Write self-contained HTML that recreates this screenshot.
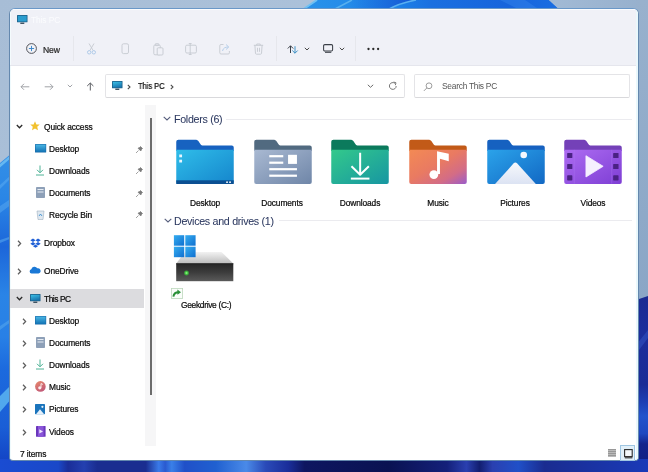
<!DOCTYPE html>
<html><head><meta charset="utf-8">
<style>
*{margin:0;padding:0;box-sizing:border-box}
html,body{width:648px;height:472px;overflow:hidden}
body{position:relative;font-family:"Liberation Sans",sans-serif;background:#a7bcd4}
.a{position:absolute}
.t{will-change:transform;position:absolute;font-size:8.4px;color:#0c0c0c;white-space:nowrap;line-height:10px;letter-spacing:-0.1px;-webkit-text-stroke:0.22px currentColor}
.h{will-change:transform;position:absolute;font-size:10.7px;color:#2c3960;white-space:nowrap;line-height:12px;letter-spacing:-0.3px;-webkit-text-stroke:0.05px currentColor}
.lbl{will-change:transform;position:absolute;font-size:8.4px;color:#0c0c0c;white-space:nowrap;line-height:10px;text-align:center;width:78px;letter-spacing:-0.1px;-webkit-text-stroke:0.22px currentColor}
svg{position:absolute;overflow:visible}
</style></head><body>
<!-- wallpaper -->
<svg style="left:0;top:0" width="648" height="472" viewBox="0 0 648 472">
  <defs>
    <linearGradient id="gtop" x1="0" y1="0" x2="1" y2="0.7"><stop offset="0" stop-color="#a7bdd6"/><stop offset="0.4" stop-color="#acc2da"/><stop offset="0.75" stop-color="#9cb5d1"/><stop offset="1" stop-color="#8ca8c7"/></linearGradient>
    <linearGradient id="gbloom" x1="0" y1="0" x2="1" y2="0"><stop offset="0" stop-color="#2a93ea"/><stop offset="0.35" stop-color="#1e84e8"/><stop offset="0.5" stop-color="#1a70e0"/><stop offset="0.8" stop-color="#1764dc"/><stop offset="1" stop-color="#1a6ee2"/></linearGradient>
    <linearGradient id="gleft" x1="0" y1="150" x2="0" y2="472" gradientUnits="userSpaceOnUse">
      <stop offset="0" stop-color="#3490e6"/><stop offset="0.15" stop-color="#2a86e6"/><stop offset="0.3" stop-color="#1c66da"/><stop offset="0.45" stop-color="#2a84e6"/><stop offset="0.58" stop-color="#2880e6"/><stop offset="0.68" stop-color="#1c6ade"/><stop offset="0.86" stop-color="#1a5ed6"/><stop offset="0.95" stop-color="#1448c8"/><stop offset="1" stop-color="#163cb8"/>
    </linearGradient>
    <linearGradient id="gbot" x1="0" y1="0" x2="1" y2="0"><stop offset="0" stop-color="#1a4cd2"/><stop offset="0.09" stop-color="#1a48c8"/><stop offset="0.105" stop-color="#1a2e98"/><stop offset="0.13" stop-color="#2440b0"/><stop offset="0.15" stop-color="#1a2d90"/><stop offset="0.225" stop-color="#1a2d90"/><stop offset="0.245" stop-color="#3a7ae8"/><stop offset="0.255" stop-color="#2a5ad0"/><stop offset="0.265" stop-color="#3a80e8"/><stop offset="0.285" stop-color="#2050c8"/><stop offset="0.333" stop-color="#2060d0"/><stop offset="0.38" stop-color="#4a8ae8"/><stop offset="0.41" stop-color="#2a4ab8"/><stop offset="0.445" stop-color="#1a2e9a"/><stop offset="0.47" stop-color="#0e1660"/><stop offset="0.6" stop-color="#0a1252"/><stop offset="0.69" stop-color="#14207a"/><stop offset="0.72" stop-color="#2a40b0"/><stop offset="0.74" stop-color="#121e70"/><stop offset="0.76" stop-color="#2a40b0"/><stop offset="0.8" stop-color="#2050c8"/><stop offset="0.84" stop-color="#1a2c90"/><stop offset="1" stop-color="#1a3ab8"/></linearGradient>
  </defs>
  <rect width="648" height="472" fill="url(#gtop)"/>
  <path d="M303 10 L317 0 L549 0 L560 10 Z" fill="url(#gbloom)"/>
  <path d="M303 9.5 L317 0" stroke="#6fc0f2" stroke-width="2"/>
  <path d="M334 9.5 L352 0" stroke="#58b0ee" stroke-width="1.5"/>
  
  <defs><linearGradient id="gdark" x1="350" y1="0" x2="416" y2="0" gradientUnits="userSpaceOnUse"><stop offset="0" stop-color="#1450d0" stop-opacity="0"/><stop offset="1" stop-color="#1450d0" stop-opacity="0.85"/></linearGradient></defs><path d="M350 0 H416 Q400 3 389 9.5 H345Z" fill="url(#gdark)"/><path d="M388 9.5 Q400 3 416 0" stroke="#5ab0f0" stroke-width="1.6" fill="none"/>
  <path d="M500 0 L520 10 L540 10 L525 0Z" fill="#3a8aee" opacity="0.4"/>
  <path d="M0 163 L12 153 L12 472 L0 472Z" fill="url(#gleft)"/>
  <path d="M0 164 L12 154 L12 157 L0 167.5Z" fill="#6cbcf2" opacity="0.9"/>
  <path d="M0 185 L12 174 L12 177 L0 189Z" fill="#5aaaf0" opacity="0.55"/>
  <path d="M0 206 L12 198 L12 204 L0 213Z" fill="#5aaaf0" opacity="0.5"/>
  <path d="M0 240 L12 236 L12 238 L0 243Z" fill="#60b0f0" opacity="0.5"/>
  <path d="M0 326 L12 318 L12 321 L0 330Z" fill="#60b0f0" opacity="0.45"/>
  <path d="M0 396 L12 384 L12 398 L0 412Z" fill="#5ab4f0" opacity="0.85"/>
  <defs><linearGradient id="gright" x1="0" y1="297" x2="0" y2="472" gradientUnits="userSpaceOnUse">
    <stop offset="0" stop-color="#1a2a92"/><stop offset="0.2" stop-color="#1c2e9c"/><stop offset="0.5" stop-color="#1a2c96"/><stop offset="0.6" stop-color="#1d3fb4"/><stop offset="0.68" stop-color="#2354cc"/><stop offset="0.78" stop-color="#1e48c0"/><stop offset="0.84" stop-color="#14248c"/><stop offset="1" stop-color="#121f80"/>
  </linearGradient></defs>
  <defs><linearGradient id="grgray" x1="0" y1="0" x2="0" y2="1"><stop offset="0" stop-color="#98b1cd"/><stop offset="1" stop-color="#8aa6c6"/></linearGradient><linearGradient id="gtopr" x1="550" y1="0" x2="648" y2="0" gradientUnits="userSpaceOnUse"><stop offset="0" stop-color="#a2bad5"/><stop offset="1" stop-color="#96b0cd"/></linearGradient></defs><path d="M549 0 H648 V10 H560Z" fill="url(#gtopr)"/><rect x="636" y="0" width="12" height="300" fill="url(#grgray)"/><path d="M636 300 Q642 298 648 296 V472 H636Z" fill="url(#gright)"/>
  <path d="M636 345 L648 330 L648 338 L636 354Z" fill="#3050c0" opacity="0.6"/>
  <rect x="0" y="459" width="648" height="13" fill="url(#gbot)"/>
</svg>

<!-- window -->
<div class="a" style="left:9px;top:8px;width:630px;height:453px;border:1px solid #6488ae;border-top-color:#6a98c8;border-radius:6px 6px 4px 4px;background:#fff;overflow:hidden">
  <div class="a" style="left:0;top:0;width:630px;height:57px;background:#f0f1f7;border-bottom:1px solid #e5e6ed;box-shadow:inset 0 1px 0 #fbfcfe, inset 1px 0 0 #f4fbfd"></div>
  <div class="a" style="left:0;top:57px;width:1px;height:394px;background:#effafd"></div>
  <div class="a" style="left:626px;top:0;width:2px;height:451px;background:#eaf8fc"></div>
</div>

<!-- title -->
<svg style="left:17px;top:14.8px" width="11" height="10" viewBox="0 0 11 10">
  <rect x="0" y="0" width="10.5" height="7.3" rx="0.5" fill="#1d5f88"/>
  <rect x="0.8" y="0.8" width="8.9" height="5.7" fill="#2a9cce"/>
  <rect x="3.3" y="7.6" width="4" height="1.3" fill="#2f4456"/>
</svg>
<div class="t" style="left:31px;top:14.5px;color:#fbfcfe;-webkit-text-stroke:0">This PC</div>

<!-- toolbar -->
<svg style="left:25.5px;top:43.3px" width="11" height="11" viewBox="0 0 11 11">
  <circle cx="5.5" cy="5.5" r="4.9" fill="none" stroke="#4a4c52" stroke-width="0.95"/>
  <path d="M5.5 2.9V8.1M2.9 5.5H8.1" stroke="#3a86c8" stroke-width="0.95"/>
</svg>
<div class="t" style="left:43px;top:44.8px;font-size:8.6px;color:#2a2a2a">New</div>
<div class="a" style="left:72.5px;top:36px;width:1px;height:25px;background:#e6e7ec"></div>
<!-- cut -->
<svg style="left:86px;top:43px" width="11" height="12" viewBox="0 0 11 12">
  <path d="M3 0.5L7.2 7.6M8 0.5L3.8 7.6" stroke="#c5c9d0" stroke-width="0.9" fill="none"/>
  <circle cx="3.2" cy="9.3" r="1.7" fill="none" stroke="#a8c6e6" stroke-width="0.9"/>
  <circle cx="7.8" cy="9.3" r="1.7" fill="none" stroke="#a8c6e6" stroke-width="0.9"/>
</svg>
<!-- copy -->
<svg style="left:120.5px;top:43px" width="9" height="12" viewBox="0 0 9 12">
  <rect x="1" y="0.8" width="6.5" height="9.8" rx="1.5" fill="none" stroke="#c5c9d0" stroke-width="0.9"/>
</svg>
<!-- paste -->
<svg style="left:152.5px;top:42.5px" width="11" height="13" viewBox="0 0 11 13">
  <rect x="0.8" y="2" width="6.5" height="9.8" rx="1.2" fill="none" stroke="#c5c9d0" stroke-width="0.9"/>
  <rect x="4.2" y="4.8" width="5.8" height="7.2" rx="1" fill="#f0f1f7" stroke="#c5c9d0" stroke-width="0.9"/>
  <rect x="2.3" y="0.6" width="3.5" height="2" rx="0.6" fill="none" stroke="#c5c9d0" stroke-width="0.8"/>
</svg>
<!-- rename -->
<svg style="left:184.8px;top:43.3px" width="12" height="12" viewBox="0 0 12 12">
  <rect x="0.6" y="2.2" width="10.8" height="7.8" rx="1.3" fill="none" stroke="#c5c9d0" stroke-width="0.9"/>
  <path d="M5.2 0.5V11.5M3.8 0.5H6.6M3.8 11.5H6.6" stroke="#c5c9d0" stroke-width="0.9"/>
</svg>
<!-- share -->
<svg style="left:218.5px;top:43px" width="12" height="12" viewBox="0 0 12 12">
  <path d="M4.5 1.5H2A1.2 1.2 0 0 0 0.8 2.7V9.8A1.2 1.2 0 0 0 2 11H9.2A1.2 1.2 0 0 0 10.4 9.8V8" fill="none" stroke="#c5c9d0" stroke-width="0.9"/>
  <path d="M3.5 8C4 5 6.5 4 9 4M7 1.5L9.8 4L7 6.5" fill="none" stroke="#b0cbe8" stroke-width="0.9"/>
</svg>
<!-- delete -->
<svg style="left:252.5px;top:43px" width="11" height="12" viewBox="0 0 11 12">
  <path d="M0.8 2.3H10.2M3.8 2.3V1H7.2V2.3M1.9 2.3L2.5 10.4A1 1 0 0 0 3.5 11.2H7.5A1 1 0 0 0 8.5 10.4L9.1 2.3M4.5 4.8V8.8M6.5 4.8V8.8" fill="none" stroke="#c5c9d0" stroke-width="0.9"/>
</svg>
<div class="a" style="left:275.5px;top:36px;width:1px;height:25px;background:#e6e7ec"></div>
<!-- sort -->
<svg style="left:287px;top:45px" width="12" height="9" viewBox="0 0 12 9">
  <path d="M3.5 8V0.8M0.8 3.5L3.5 0.8L6.2 3.5" fill="none" stroke="#3b4048" stroke-width="1"/>
  <path d="M8 1.2V8.2M5.3 5.5L8 8.2L10.7 5.5" fill="none" stroke="#3f92c6" stroke-width="1"/>
</svg>
<svg style="left:304.3px;top:46.8px" width="6" height="4" viewBox="0 0 6 4"><path d="M0.8 0.8L3 3L5.2 0.8" fill="none" stroke="#4a4a4a" stroke-width="1"/></svg>
<!-- view -->
<svg style="left:322.5px;top:44px" width="10" height="9" viewBox="0 0 10 9">
  <rect x="0.6" y="0.6" width="9" height="6.4" rx="1.2" fill="none" stroke="#3b4048" stroke-width="1.05"/>
  <path d="M2 8.3H8.3" stroke="#3b4048" stroke-width="1.05"/>
</svg>
<svg style="left:338.5px;top:46.8px" width="6" height="4" viewBox="0 0 6 4"><path d="M0.8 0.8L3 3L5.2 0.8" fill="none" stroke="#4a4a4a" stroke-width="1"/></svg>
<div class="a" style="left:355px;top:36px;width:1px;height:25px;background:#e6e7ec"></div>
<svg style="left:366.5px;top:47.3px" width="13" height="4" viewBox="0 0 13 4">
  <circle cx="1.5" cy="2" r="1.15" fill="#2a2a2a"/><circle cx="6.3" cy="2" r="1.15" fill="#2a2a2a"/><circle cx="11.1" cy="2" r="1.15" fill="#2a2a2a"/>
</svg>

<!-- nav buttons -->
<svg style="left:20px;top:82.5px" width="10" height="8" viewBox="0 0 10 8"><path d="M9.3 3.8H1M4 0.8L1 3.8L4 6.8" fill="none" stroke="#9c9ea3" stroke-width="0.95"/></svg>
<svg style="left:44px;top:82.5px" width="10" height="8" viewBox="0 0 10 8"><path d="M0.7 3.8H9M6 0.8L9 3.8L6 6.8" fill="none" stroke="#9c9ea3" stroke-width="0.95"/></svg>
<svg style="left:67px;top:84px" width="6" height="4" viewBox="0 0 6 4"><path d="M0.8 0.8L3 3L5.2 0.8" fill="none" stroke="#9c9ea3" stroke-width="0.95"/></svg>
<svg style="left:86px;top:82px" width="9" height="9" viewBox="0 0 9 9"><path d="M4.3 8.5V1M1.2 4L4.3 1L7.4 4" fill="none" stroke="#5c5e63" stroke-width="1"/></svg>

<!-- address box -->
<div class="a" style="left:105px;top:74px;width:300px;height:23.5px;border:1px solid #e4e4e7;border-bottom-color:#d9d9dc;background:#fff;border-radius:2px"></div>
<svg style="left:111.5px;top:81.3px" width="11" height="10" viewBox="0 0 11 10">
  <defs><linearGradient id="mon" x1="0" y1="0" x2="0.4" y2="1"><stop offset="0" stop-color="#3cc0e6"/><stop offset="1" stop-color="#1a78b0"/></linearGradient></defs>
  <rect x="0" y="0" width="10.5" height="7.3" rx="0.5" fill="#1d5f88"/>
  <rect x="0.8" y="0.8" width="8.9" height="5.7" fill="url(#mon)"/>
  <rect x="3.3" y="7.6" width="4" height="1.3" fill="#2f4456"/>
</svg>
<svg style="left:127px;top:83.5px" width="4" height="6" viewBox="0 0 4 6"><path d="M0.8 0.8L3 3L0.8 5.2" fill="none" stroke="#4a4a4a" stroke-width="1.1"/></svg>
<div class="t" style="left:138px;top:81.2px;font-size:8.8px;letter-spacing:0;transform:scaleX(0.85);transform-origin:0 0">This PC</div>
<svg style="left:170px;top:83.5px" width="4" height="6" viewBox="0 0 4 6"><path d="M0.8 0.8L3 3L0.8 5.2" fill="none" stroke="#4a4a4a" stroke-width="1.1"/></svg>
<svg style="left:366.5px;top:83.5px" width="7" height="4" viewBox="0 0 7 4"><path d="M0.8 0.8L3.5 3.3L6.2 0.8" fill="none" stroke="#6a6a6a" stroke-width="1"/></svg>
<svg style="left:387.6px;top:80.6px" width="10" height="10" viewBox="0 0 10 10">
  <path d="M8.2 5A3.4 3.4 0 1 1 6.9 2.3" fill="none" stroke="#6a6a6a" stroke-width="0.9"/>
  <path d="M5.6 1L8 1.8L7.3 4.2" fill="none" stroke="#6a6a6a" stroke-width="0.9"/>
</svg>

<!-- search box -->
<div class="a" style="left:414px;top:74px;width:216px;height:23.5px;border:1px solid #e4e4e7;border-bottom-color:#d9d9dc;background:#fff;border-radius:2px"></div>
<svg style="left:423px;top:82px" width="10" height="10" viewBox="0 0 10 10">
  <circle cx="6" cy="3.8" r="2.9" fill="none" stroke="#8a8a8a" stroke-width="0.85"/>
  <path d="M3.9 5.9L0.9 8.9" stroke="#8a8a8a" stroke-width="0.85"/>
</svg>
<div class="t" style="left:441.5px;top:81.2px;color:#555;letter-spacing:-0.25px;-webkit-text-stroke:0">Search This PC</div>

<!-- sidebar selection -->
<div class="a" style="left:10px;top:289px;width:134px;height:19px;background:#dcdcdf"></div>
<!-- scrollbar -->
<div class="a" style="left:145px;top:105px;width:11px;height:341px;background:#f6f6f7"></div>
<div class="a" style="left:150px;top:118px;width:1.7px;height:277px;background:#6c6c6c"></div>

<!-- sidebar items -->
<!-- chevrons -->
<svg style="left:15.8px;top:123.8px" width="7" height="5" viewBox="0 0 7 5"><path d="M0.8 1L3.5 3.8L6.2 1" fill="none" stroke="#2a2a2a" stroke-width="1.3"/></svg>
<svg style="left:16.5px;top:239.5px" width="5" height="7" viewBox="0 0 5 7"><path d="M1 0.8L3.6 3.5L1 6.2" fill="none" stroke="#5e5e5e" stroke-width="1.25"/></svg>
<svg style="left:16.5px;top:267.5px" width="5" height="7" viewBox="0 0 5 7"><path d="M1 0.8L3.6 3.5L1 6.2" fill="none" stroke="#5e5e5e" stroke-width="1.25"/></svg>
<svg style="left:15.8px;top:296px" width="7" height="5" viewBox="0 0 7 5"><path d="M0.8 1L3.5 3.8L6.2 1" fill="none" stroke="#2a2a2a" stroke-width="1.3"/></svg>
<svg style="left:21.5px;top:317.5px" width="5" height="7" viewBox="0 0 5 7"><path d="M1 0.8L3.6 3.5L1 6.2" fill="none" stroke="#5e5e5e" stroke-width="1.25"/></svg>
<svg style="left:21.5px;top:339.5px" width="5" height="7" viewBox="0 0 5 7"><path d="M1 0.8L3.6 3.5L1 6.2" fill="none" stroke="#5e5e5e" stroke-width="1.25"/></svg>
<svg style="left:21.5px;top:361.5px" width="5" height="7" viewBox="0 0 5 7"><path d="M1 0.8L3.6 3.5L1 6.2" fill="none" stroke="#5e5e5e" stroke-width="1.25"/></svg>
<svg style="left:21.5px;top:383.5px" width="5" height="7" viewBox="0 0 5 7"><path d="M1 0.8L3.6 3.5L1 6.2" fill="none" stroke="#5e5e5e" stroke-width="1.25"/></svg>
<svg style="left:21.5px;top:405.5px" width="5" height="7" viewBox="0 0 5 7"><path d="M1 0.8L3.6 3.5L1 6.2" fill="none" stroke="#5e5e5e" stroke-width="1.25"/></svg>
<svg style="left:21.5px;top:428.5px" width="5" height="7" viewBox="0 0 5 7"><path d="M1 0.8L3.6 3.5L1 6.2" fill="none" stroke="#5e5e5e" stroke-width="1.25"/></svg>

<!-- quick access star -->
<svg style="left:30px;top:121px" width="10" height="10" viewBox="0 0 10 10"><path d="M5 0.3L6.4 3.4L9.7 3.6L7.2 5.8L8 9.2L5 7.4L2 9.2L2.8 5.8L0.3 3.6L3.6 3.4Z" fill="#f2c12e"/></svg>
<div class="t" style="left:44px;top:121.6px">Quick access</div>

<!-- desktop icon -->
<svg style="left:34.8px;top:144px" width="11.2" height="8.6" viewBox="0 0 11.2 8.6"><defs><linearGradient id="dsk" x1="0" y1="0" x2="0" y2="1"><stop offset="0" stop-color="#4ab6e4"/><stop offset="1" stop-color="#1272b4"/></linearGradient></defs><rect width="11.2" height="8.6" rx="0.5" fill="#1a6aa8"/><rect x="0.6" y="0.6" width="10" height="7.4" fill="url(#dsk)"/></svg>
<div class="t" style="left:49px;top:143.6px">Desktop</div>
<svg style="left:35px;top:165px" width="10" height="11" viewBox="0 0 10 11"><path d="M5 0.5V7.5M2 4.8L5 7.8L8 4.8M1 10H9" fill="none" stroke="#3aa98a" stroke-width="0.9"/></svg>
<div class="t" style="left:49px;top:165.6px">Downloads</div>
<svg style="left:36px;top:187px" width="9" height="11" viewBox="0 0 9 11"><rect x="0" y="0" width="9" height="11" rx="0.8" fill="#8ea0b8"/><rect x="1.5" y="2" width="6" height="1" fill="#e6ecf3"/><rect x="1.5" y="4.5" width="6" height="1" fill="#e6ecf3"/></svg>
<div class="t" style="left:49px;top:187.6px">Documents</div>
<svg style="left:36px;top:209px" width="9" height="11" viewBox="0 0 9 11"><path d="M1 2L2 10.5H7L8 2Z" fill="#dfe8f0" stroke="#9fb0c0" stroke-width="0.6"/><path d="M3 7L4.5 5L6 7" fill="none" stroke="#2c86cf" stroke-width="0.8"/></svg>
<div class="t" style="left:49px;top:209.6px">Recycle Bin</div>

<!-- pins -->
<svg style="left:134.5px;top:145.5px" width="8" height="8" viewBox="0 0 8 8"><path d="M1 7L3.5 4.5M3 2.2L5.8 5L6.5 3.5L7.5 2.5L5.5 0.5L4.5 1.5Z" fill="#7a7a7a" stroke="#7a7a7a" stroke-width="0.7"/></svg>
<svg style="left:134.5px;top:167px" width="8" height="8" viewBox="0 0 8 8"><path d="M1 7L3.5 4.5M3 2.2L5.8 5L6.5 3.5L7.5 2.5L5.5 0.5L4.5 1.5Z" fill="#7a7a7a" stroke="#7a7a7a" stroke-width="0.7"/></svg>
<svg style="left:134.5px;top:189.5px" width="8" height="8" viewBox="0 0 8 8"><path d="M1 7L3.5 4.5M3 2.2L5.8 5L6.5 3.5L7.5 2.5L5.5 0.5L4.5 1.5Z" fill="#7a7a7a" stroke="#7a7a7a" stroke-width="0.7"/></svg>
<svg style="left:134.5px;top:211px" width="8" height="8" viewBox="0 0 8 8"><path d="M1 7L3.5 4.5M3 2.2L5.8 5L6.5 3.5L7.5 2.5L5.5 0.5L4.5 1.5Z" fill="#7a7a7a" stroke="#7a7a7a" stroke-width="0.7"/></svg>

<!-- dropbox -->
<svg style="left:30px;top:238px" width="11" height="10" viewBox="0 0 11 10"><path d="M3 0.5L0.3 2.3L3 4L5.5 2.3ZM8 0.5L5.5 2.3L8 4L10.7 2.3ZM0.3 5.7L3 7.5L5.5 5.7L3 4ZM10.7 5.7L8 7.5L5.5 5.7L8 4ZM3 8.2L5.5 9.8L8 8.2L5.5 6.5Z" fill="#1f5fd6"/></svg>
<div class="t" style="left:44px;top:237.6px">Dropbox</div>
<!-- onedrive -->
<svg style="left:29px;top:266px" width="12" height="8" viewBox="0 0 12 8"><path d="M2.5 7.5A2.2 2.2 0 0 1 2.3 3.2A3.3 3.3 0 0 1 8.3 2.3A2.6 2.6 0 0 1 9.5 7.5Z" fill="#1a78d6"/></svg>
<div class="t" style="left:44px;top:265.6px">OneDrive</div>
<!-- this pc -->
<svg style="left:30px;top:293.5px" width="11" height="10" viewBox="0 0 11 10">
  <rect x="0" y="0" width="10.5" height="7.3" rx="0.5" fill="#1d5f88"/>
  <rect x="0.8" y="0.8" width="8.9" height="5.7" fill="url(#mon)"/>
  <rect x="3.3" y="7.6" width="4" height="1.3" fill="#2f4456"/>
</svg>
<div class="t" style="left:44.3px;top:293.6px;letter-spacing:-0.45px">This PC</div>

<svg style="left:35px;top:316.2px" width="11.2" height="8.6" viewBox="0 0 11.2 8.6"><rect width="11.2" height="8.6" rx="0.5" fill="#1a6aa8"/><rect x="0.6" y="0.6" width="10" height="7.4" fill="url(#dsk)"/></svg>
<div class="t" style="left:49px;top:315.6px">Desktop</div>
<svg style="left:36px;top:337px" width="9" height="11" viewBox="0 0 9 11"><rect x="0" y="0" width="9" height="11" rx="0.8" fill="#8ea0b8"/><rect x="1.5" y="2" width="6" height="1" fill="#e6ecf3"/><rect x="1.5" y="4.5" width="6" height="1" fill="#e6ecf3"/></svg>
<div class="t" style="left:49px;top:337.6px">Documents</div>
<svg style="left:35px;top:359px" width="10" height="11" viewBox="0 0 10 11"><path d="M5 0.5V7.5M2 4.8L5 7.8L8 4.8M1 10H9" fill="none" stroke="#3aa98a" stroke-width="0.9"/></svg>
<div class="t" style="left:49px;top:359.6px">Downloads</div>
<svg style="left:34.8px;top:381.3px" width="11" height="11" viewBox="0 0 11 11"><defs><linearGradient id="msc" x1="0" y1="0" x2="0.6" y2="1"><stop offset="0" stop-color="#e88a6a"/><stop offset="1" stop-color="#c25a78"/></linearGradient></defs><circle cx="5.4" cy="5.4" r="5.3" fill="url(#msc)"/><circle cx="4.8" cy="6.8" r="1.6" fill="#fbeef0"/><path d="M6 6.6V2.6L7.8 3.4" stroke="#fbeef0" stroke-width="1" fill="none"/></svg>
<div class="t" style="left:49px;top:381.6px">Music</div>
<svg style="left:35.3px;top:403.8px" width="10" height="10.2" viewBox="0 0 10 10.2"><rect width="10" height="10.2" rx="0.6" fill="#1a74bc"/><path d="M1 10.2L5 5.2L9.2 10.2Z" fill="#e6f0fa"/><circle cx="7.4" cy="2.8" r="1.1" fill="#e6f0fa"/></svg>
<div class="t" style="left:49px;top:403.6px">Pictures</div>
<svg style="left:35.5px;top:425.6px" width="9.6" height="10.8" viewBox="0 0 9.6 10.8"><rect width="9.6" height="10.8" rx="0.6" fill="#6a36bc"/><rect x="2" y="0" width="5.6" height="10.8" fill="#8a56d8"/><path d="M3.3 3.2L7 5.4L3.3 7.6Z" fill="#f0e6ff"/></svg>
<div class="t" style="left:49px;top:426.6px">Videos</div>

<div class="t" style="left:20px;top:448.6px">7 items</div>
<!-- view buttons -->
<svg style="left:608px;top:449px" width="8" height="8" viewBox="0 0 8 8"><path d="M0 0.9H8M0 2.9H8M0 4.9H8M0 6.9H8" stroke="#777" stroke-width="1.1"/></svg>
<div class="a" style="left:620px;top:445px;width:15px;height:16px;background:#e2f0f9;border:1px solid #9fc6e2"></div>
<svg style="left:623.5px;top:448.5px" width="9" height="10" viewBox="0 0 9 10"><rect x="0.6" y="0.6" width="7.6" height="7" fill="#f4f8fb" stroke="#2a2a2a" stroke-width="1.1"/><path d="M0.8 8.8H8.4" stroke="#3a3a3a" stroke-width="1.2"/></svg>

<!-- content headers -->
<svg style="left:163px;top:116px" width="8" height="5" viewBox="0 0 8 5"><path d="M0.7 0.8L4 3.9L7.3 0.8" fill="none" stroke="#555d7c" stroke-width="1.1"/></svg>
<div class="h" style="left:174px;top:113.3px">Folders (6)</div>
<div class="a" style="left:226px;top:119px;width:406px;height:1px;background:#ebebef"></div>
<svg style="left:163.5px;top:218px" width="8" height="5" viewBox="0 0 8 5"><path d="M0.7 0.8L4 3.9L7.3 0.8" fill="none" stroke="#555d7c" stroke-width="1.1"/></svg>
<div class="h" style="left:174px;top:214.8px">Devices and drives (1)</div>
<div class="a" style="left:279px;top:220px;width:353px;height:1px;background:#ebebef"></div>

<!-- FOLDERS -->
<div id="folders"></div><svg style="left:176px;top:139.3px" width="58" height="45" viewBox="0 0 57.5 45"><defs><linearGradient id="fg0" x1="0" y1="0" x2="1" y2="1"><stop offset="0" stop-color="#2fbde9"/><stop offset="1" stop-color="#1585cc"/></linearGradient></defs><path d="M0 2.8Q0 0.7 2.1 0.7H18.8C20.4 0.7 21.3 1.1 22.1 2.1L24.1 4.9C24.9 6 25.7 6.6 27.1 6.6H55.5Q57.5 6.6 57.5 8.6V12H0Z" fill="#1762c0"/><path d="M0 10.7H57.5V43A2 2 0 0 1 55.5 45H2A2 2 0 0 1 0 43Z" fill="url(#fg0)"/><rect x="0" y="41.3" width="57.5" height="3.7" fill="#0b4f92"/><rect x="1" y="44" width="55.5" height="1" fill="#0b4f92"/><circle cx="50.8" cy="43.2" r="0.9" fill="#fff"/><circle cx="53.8" cy="43.2" r="0.9" fill="#fff"/><rect x="3" y="15.5" width="2.8" height="2.8" fill="#e8f6ff"/><rect x="3" y="20.7" width="2.8" height="2.8" fill="#e8f6ff"/></svg>
<div class="lbl" style="left:165.75px;top:197.5px">Desktop</div>
<svg style="left:253.5px;top:139.3px" width="58" height="45" viewBox="0 0 57.5 45"><defs><linearGradient id="fg1" x1="0" y1="0" x2="1" y2="1"><stop offset="0" stop-color="#a9b9d2"/><stop offset="1" stop-color="#6f86a8"/></linearGradient></defs><path d="M0 2.8Q0 0.7 2.1 0.7H18.8C20.4 0.7 21.3 1.1 22.1 2.1L24.1 4.9C24.9 6 25.7 6.6 27.1 6.6H55.5Q57.5 6.6 57.5 8.6V12H0Z" fill="#516a80"/><path d="M0 10.7H57.5V43A2 2 0 0 1 55.5 45H2A2 2 0 0 1 0 43Z" fill="url(#fg1)"/><rect x="15" y="16.1" width="14" height="2.2" fill="#fff"/><rect x="15" y="22.6" width="14" height="2.2" fill="#fff"/><rect x="15" y="29.1" width="27.7" height="2.2" fill="#fff"/><rect x="15" y="35.6" width="27.7" height="2.2" fill="#fff"/><rect x="33.8" y="15.8" width="8.9" height="9.1" fill="#fff"/></svg>
<div class="lbl" style="left:243.25px;top:197.5px">Documents</div>
<svg style="left:331.3px;top:139.3px" width="58" height="45" viewBox="0 0 57.5 45"><defs><linearGradient id="fg2" x1="0" y1="0" x2="1" y2="1"><stop offset="0" stop-color="#33c98b"/><stop offset="1" stop-color="#1796a2"/></linearGradient></defs><path d="M0 2.8Q0 0.7 2.1 0.7H18.8C20.4 0.7 21.3 1.1 22.1 2.1L24.1 4.9C24.9 6 25.7 6.6 27.1 6.6H55.5Q57.5 6.6 57.5 8.6V12H0Z" fill="#0b7a5c"/><path d="M0 10.7H57.5V43A2 2 0 0 1 55.5 45H2A2 2 0 0 1 0 43Z" fill="url(#fg2)"/><path d="M28.9 13.7V35.2M20.2 27.3L28.9 35.7L37.6 27.3" fill="none" stroke="#fff" stroke-width="2" stroke-linejoin="round"/><path d="M19.6 39.6H38.2" stroke="#fff" stroke-width="2"/></svg>
<div class="lbl" style="left:321.05px;top:197.5px">Downloads</div>
<svg style="left:408.8px;top:139.3px" width="58" height="45" viewBox="0 0 57.5 45"><defs><linearGradient id="fg3" x1="0" y1="0" x2="1" y2="1"><stop offset="0" stop-color="#f38a54"/><stop offset="0.45" stop-color="#e97a62"/><stop offset="0.75" stop-color="#d36c86"/><stop offset="1" stop-color="#9a5cca"/></linearGradient></defs><path d="M0 2.8Q0 0.7 2.1 0.7H18.8C20.4 0.7 21.3 1.1 22.1 2.1L24.1 4.9C24.9 6 25.7 6.6 27.1 6.6H55.5Q57.5 6.6 57.5 8.6V12H0Z" fill="#c25a18"/><path d="M0 10.7H57.5V43A2 2 0 0 1 55.5 45H2A2 2 0 0 1 0 43Z" fill="url(#fg3)"/><circle cx="24.6" cy="35.6" r="4.4" fill="#fff"/><path d="M27.8 35V12.3L39.5 14.8V22.2L30.7 19.8V35Z" fill="#fff"/></svg>
<div class="lbl" style="left:398.55px;top:197.5px">Music</div>
<svg style="left:486.5px;top:139.3px" width="58" height="45" viewBox="0 0 57.5 45"><defs><linearGradient id="fg4" x1="0" y1="0" x2="1" y2="1"><stop offset="0" stop-color="#2ba3ea"/><stop offset="1" stop-color="#1268c4"/></linearGradient></defs><path d="M0 2.8Q0 0.7 2.1 0.7H18.8C20.4 0.7 21.3 1.1 22.1 2.1L24.1 4.9C24.9 6 25.7 6.6 27.1 6.6H55.5Q57.5 6.6 57.5 8.6V12H0Z" fill="#1661c0"/><path d="M0 10.7H57.5V43A2 2 0 0 1 55.5 45H2A2 2 0 0 1 0 43Z" fill="url(#fg4)"/><path d="M7.8 45L26.2 24.6A2.6 2.6 0 0 1 30 24.6L48.6 45Z" fill="url(#mtn)"/><defs><linearGradient id="mtn" x1="0" y1="0" x2="0" y2="1"><stop offset="0" stop-color="#f6f8fc"/><stop offset="1" stop-color="#dce3f3"/></linearGradient></defs><circle cx="36.5" cy="16" r="3.3" fill="#f4f8fd"/></svg>
<div class="lbl" style="left:476.25px;top:197.5px">Pictures</div>
<svg style="left:564px;top:139.3px" width="58" height="45" viewBox="0 0 57.5 45"><defs><linearGradient id="fg5" x1="0" y1="0" x2="1" y2="1"><stop offset="0" stop-color="#ad6cf2"/><stop offset="1" stop-color="#7e3ed4"/></linearGradient></defs><path d="M0 2.8Q0 0.7 2.1 0.7H18.8C20.4 0.7 21.3 1.1 22.1 2.1L24.1 4.9C24.9 6 25.7 6.6 27.1 6.6H55.5Q57.5 6.6 57.5 8.6V12H0Z" fill="#7441b8"/><path d="M0 10.7H57.5V43A2 2 0 0 1 55.5 45H2A2 2 0 0 1 0 43Z" fill="url(#fg5)"/><g fill="#4a2184"><rect x="2.9" y="13.9" width="5.2" height="5.2" rx="0.7"/><rect x="2.9" y="24.9" width="5.2" height="5.2" rx="0.7"/><rect x="2.9" y="36.3" width="5.2" height="5.2" rx="0.7"/><rect x="48.9" y="13.9" width="5.4" height="5.2" rx="0.7"/><rect x="48.9" y="24.9" width="5.4" height="5.2" rx="0.7"/><rect x="48.9" y="36.3" width="5.4" height="5.2" rx="0.7"/></g><rect x="9.5" y="10.7" width="1" height="34" fill="#b27cf4" opacity="0.35"/><rect x="47" y="10.7" width="1" height="34" fill="#b27cf4" opacity="0.35"/><path d="M21.7 16.7L38.9 27.3L21.7 38Z" fill="#f6f0ff" stroke="#f6f0ff" stroke-width="0.8" stroke-linejoin="round"/></svg>
<div class="lbl" style="left:553.75px;top:197.5px">Videos</div><!--/folders-->

<!-- drive -->
<svg style="left:173px;top:234px" width="62" height="50" viewBox="0 0 62 50">
  <defs>
    <linearGradient id="dtop" x1="0" y1="0" x2="0" y2="1"><stop offset="0" stop-color="#f2f2f2"/><stop offset="1" stop-color="#bdbdbd"/></linearGradient>
    <linearGradient id="dfront" x1="0" y1="0" x2="0" y2="1"><stop offset="0" stop-color="#262626"/><stop offset="0.5" stop-color="#3c3c3c"/><stop offset="1" stop-color="#5a5a5a"/></linearGradient>
    <linearGradient id="wl" x1="0" y1="0" x2="1" y2="1"><stop offset="0" stop-color="#35adf0"/><stop offset="1" stop-color="#0f6fd0"/></linearGradient>
    <radialGradient id="led"><stop offset="0" stop-color="#9cff8c"/><stop offset="0.5" stop-color="#3ec23e"/><stop offset="1" stop-color="#3ec23e" stop-opacity="0"/></radialGradient>
  </defs>
  <path d="M12 18H48.5L60.3 29.4H3.2Z" fill="url(#dtop)"/>
  <rect x="3.2" y="29.4" width="57.1" height="17.8" fill="url(#dfront)"/>
  <rect x="3.2" y="29.4" width="57.1" height="0.8" fill="#1e1e1e"/>
  <circle cx="13.5" cy="39" r="3" fill="url(#led)"/>
  <rect x="0.9" y="1.2" width="10.3" height="10.5" fill="url(#wl)"/>
  <rect x="12.3" y="1.2" width="10.3" height="10.5" fill="url(#wl)"/>
  <rect x="0.9" y="12.7" width="10.3" height="10.5" fill="url(#wl)"/>
  <rect x="12.3" y="12.7" width="10.3" height="10.5" fill="url(#wl)"/>
</svg>
<svg style="left:171.2px;top:288px" width="12" height="11" viewBox="0 0 12 11"><rect x="0.4" y="0.4" width="11.2" height="10" fill="#fafdfa" stroke="#bcd8bc" stroke-width="0.8"/><path d="M2.4 8.6C2.8 5.6 4.6 4.2 7.4 4.2" fill="none" stroke="#2a9038" stroke-width="2"/><path d="M6.4 1.6L10 4.2L6.4 6.8Z" fill="#2a9038"/></svg>
<div class="t" style="left:180.5px;top:300.3px;letter-spacing:-0.3px">Geekdrive (C:)</div>
</body></html>
